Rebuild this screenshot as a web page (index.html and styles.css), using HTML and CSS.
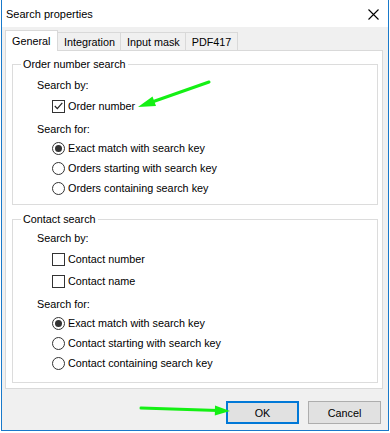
FILE: index.html
```html
<!DOCTYPE html>
<html lang="en">
<head>
    <meta charset="UTF-8">
    <meta name="viewport" content="width=device-width, initial-scale=1.0">
    <title>Search properties</title>
    <link rel="stylesheet" href="styles.css">
</head>
<body>

<div class="window">
    <div class="titlebar">
        <span class="title">Search properties</span>
        <svg class="close" width="11" height="11" viewBox="0 0 11 11">
            <path d="M0.5 0.5 L10.5 10.5 M10.5 0.5 L0.5 10.5" stroke="#000" stroke-width="1.1" fill="none"/>
        </svg>
    </div>

    <div class="client">
        <div class="tabs">
            <div class="tab active">General</div>
            <div class="tab">Integration</div>
            <div class="tab">Input mask</div>
            <div class="tab">PDF417</div>
        </div>

        <div class="panel">
            <fieldset class="group group-order">
                <legend>Order number search</legend>
                <div class="caption">Search by:</div>
                <label class="option check-row">
                    <span class="checkbox checked">
                        <svg width="9" height="8" viewBox="0 0 9 8"><polyline points="0.8,4 3.3,6.6 8.3,0.8" fill="none" stroke="#222" stroke-width="1.2"/></svg>
                    </span>
                    Order number
                </label>
                <div class="caption caption-for">Search for:</div>
                <label class="option"><span class="radio checked"></span>Exact match with search key</label>
                <label class="option"><span class="radio"></span>Orders starting with search key</label>
                <label class="option"><span class="radio"></span>Orders containing search key</label>
            </fieldset>

            <fieldset class="group group-contact">
                <legend>Contact search</legend>
                <div class="caption">Search by:</div>
                <label class="option check-row"><span class="checkbox"></span>Contact number</label>
                <label class="option check-row"><span class="checkbox"></span>Contact name</label>
                <div class="caption caption-for">Search for:</div>
                <label class="option"><span class="radio checked"></span>Exact match with search key</label>
                <label class="option"><span class="radio"></span>Contact starting with search key</label>
                <label class="option"><span class="radio"></span>Contact containing search key</label>
            </fieldset>
        </div>

        <div class="buttons">
            <button class="btn btn-default">OK</button>
            <button class="btn">Cancel</button>
        </div>
    </div>
</div>

<!-- green annotation arrows drawn over the dialog -->
<svg class="arrows" width="390" height="433" viewBox="0 0 390 433">
    <line x1="209" y1="82" x2="152" y2="102" stroke="#14f014" stroke-width="3" stroke-linecap="round"/>
    <polygon points="138,107 152.5,96.5 156,106" fill="#14f014"/>
    <line x1="141" y1="408" x2="218" y2="410.5" stroke="#14f014" stroke-width="3" stroke-linecap="round"/>
    <polygon points="230,411 215,405.5 214.8,415.5" fill="#14f014"/>
</svg>

</body>
</html>
```

FILE: styles.css
```css
body {
    margin: 0;
    background: #fff;
    font-family: "Liberation Sans", Arial, sans-serif;
    font-size: 10.8px;
    color: #000;
}
.window {
    margin-left: 1px;
    width: 388px;
    height: 431px;
    box-sizing: border-box;
    border: 1px solid #1979ca;
    border-top: none;
    background: #f0f0f0;
    display: flex;
    flex-direction: column;
}
.titlebar {
    height: 27px;
    background: #fff;
    display: flex;
    align-items: center;
    justify-content: space-between;
    padding: 1px 9px 0 4px;
    box-sizing: border-box;
    font-size: 11px;
}
.client {
    flex: 1;
    padding: 3px 5px 0 3px;
}
.tabs {
    display: flex;
    align-items: flex-end;
    height: 20px;
}
.tab {
    display: flex;
    align-items: center;
    height: 17px;
    padding: 0 5.5px;
    border: 1px solid #d9d9d9;
    border-bottom: none;
    margin-left: -1px;
    background: #f0f0f0;
}
.tab.active {
    height: 20px;
    padding: 0 7px 0 6px;
    margin-left: 0;
    margin-bottom: -1px;
    background: #fff;
    position: relative;
    z-index: 1;
}
.panel {
    height: 339px;
    box-sizing: border-box;
    border: 1px solid #d9d9d9;
    background: #fff;
    padding: 0 4px 0 6px;
}
.group {
    margin: 6px 0 0;
    padding: 4px 0 6px 8px;
    border: 1px solid #dcdcdc;
    min-width: 0;
}
.group-contact {
    margin-top: 7px;
    padding-top: 2px;
    padding-bottom: 9px;
}
legend {
    padding: 0 2px;
    line-height: 14px;
}
.caption {
    height: 20px;
    display: flex;
    align-items: center;
    margin-left: 16px;
}
.caption-for {
    height: 18px;
    margin-top: 3px;
}
.option {
    height: 20px;
    display: flex;
    align-items: center;
    gap: 3px;
    margin-left: 31px;
}
.check-row {
    height: 22px;
}
.checkbox {
    width: 13px;
    height: 13px;
    box-sizing: border-box;
    border: 1px solid #333;
    background: #fff;
    display: flex;
    align-items: center;
    justify-content: center;
}
.radio {
    width: 13px;
    height: 13px;
    box-sizing: border-box;
    border: 1px solid #333;
    border-radius: 50%;
    background: #fff;
    display: flex;
    align-items: center;
    justify-content: center;
}
.radio.checked::after {
    content: "";
    width: 7px;
    height: 7px;
    border-radius: 50%;
    background: #333;
}
.buttons {
    display: flex;
    justify-content: flex-end;
    gap: 9px;
    margin-top: 12px;
    padding-right: 2px;
}
.btn {
    width: 73px;
    height: 23px;
    box-sizing: border-box;
    padding: 0;
    border: 1px solid #adadad;
    background: #e1e1e1;
    font: inherit;
    color: #000;
}
.btn-default {
    border: 2px solid #0078d7;
}
.arrows {
    position: absolute;
    top: 0;
    left: 0;
    pointer-events: none;
}
```
